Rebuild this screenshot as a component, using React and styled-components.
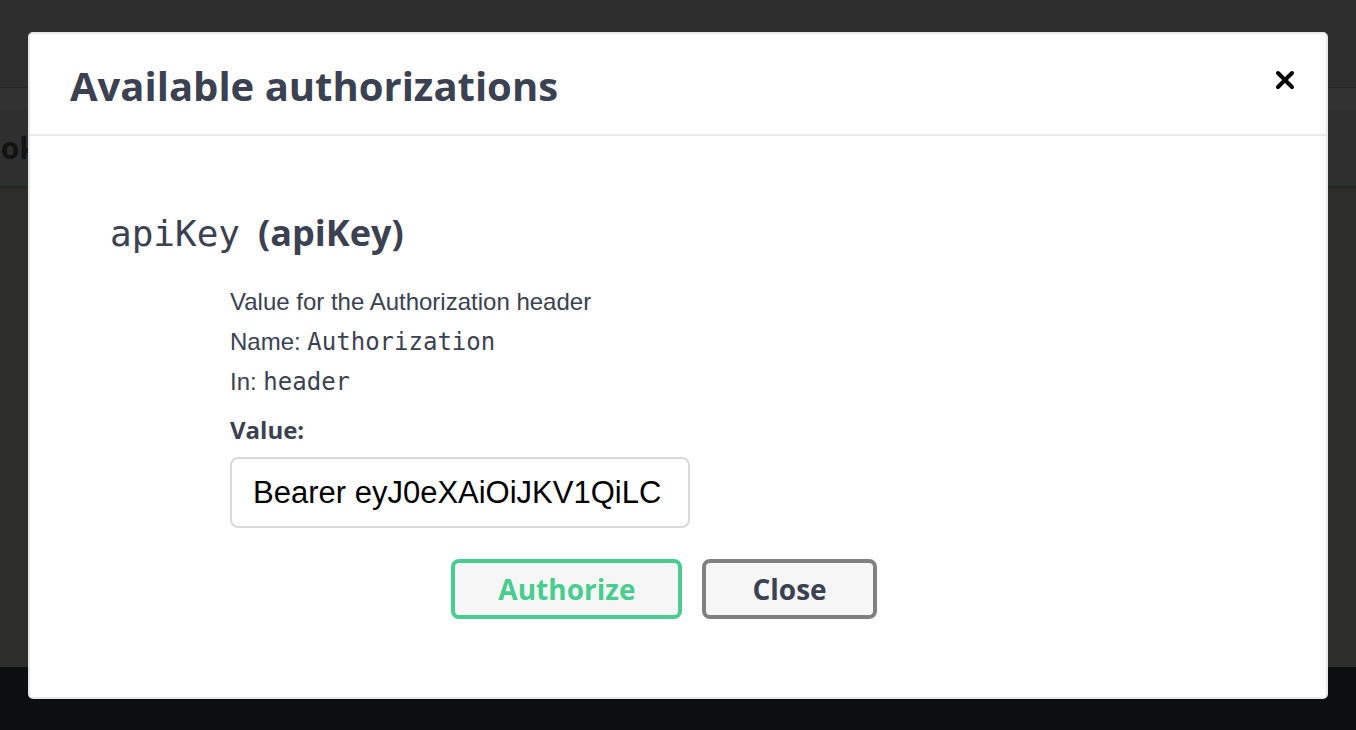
import React from "react";
import styled, { createGlobalStyle } from "styled-components";

const GlobalStyle = createGlobalStyle`
  html, body {
    margin: 0;
    padding: 0;
    background: #0d0e10;
  }
  * {
    box-sizing: border-box;
  }
`;

const Page = styled.div`
  height: 730px;
  display: flex;
  flex-direction: column;
  overflow: hidden;
`;

const TopBar = styled.div`
  height: 88px;
  background: #2e2e2e;
  border-bottom: 1px solid #262626;
`;

const SubBar = styled.div`
  height: 21px;
  background: #323232;
`;

const SectionHead = styled.div`
  height: 79px;
  background: #2f2f2f;
  border-bottom: 2px solid #1c2a19;
  display: flex;
  align-items: center;
  font-family: "Open Sans", sans-serif;
  font-weight: 700;
  font-size: 30px;
  color: #131313;
  text-indent: -38px;
`;

const Content = styled.div`
  flex: 1;
  background: #2d2e2b;
`;

const Footer = styled.div`
  height: 63px;
  background: #0d0e10;
`;

const Modal = styled.div`
  position: fixed;
  top: 32px;
  left: 28px;
  width: 1300px;
  height: 667px;
  background: #fff;
  border: 2px solid #e8e8e8;
  border-radius: 5px;
  display: flex;
  flex-direction: column;
  color: #3b4151;
`;

const ModalHeader = styled.div`
  height: 102px;
  display: flex;
  align-items: center;
  justify-content: space-between;
  padding: 0 31px 0 40px;
  border-bottom: 2px solid #ebebeb;
`;

const ModalTitle = styled.h3`
  margin: 0;
  font-family: "Open Sans", sans-serif;
  font-weight: 700;
  font-size: 40px;
  line-height: 1;
  padding-top: 4px;
  color: #3b4151;
`;

const CloseIcon = styled.button`
  border: 0;
  background: none;
  padding: 0;
  width: 20px;
  height: 20px;
  display: flex;
  cursor: pointer;
  margin-top: -8px;
`;

const ModalBody = styled.div`
  padding: 75px 108px 0 80px;
`;

const SchemeTitle = styled.h4`
  margin: 0;
  font-family: "Open Sans", sans-serif;
  font-weight: 700;
  font-size: 36px;
  line-height: 44px;
  color: #3b4151;
`;

const Code = styled.code`
  font-family: "DejaVu Sans Mono", monospace;
  font-weight: 400;
  font-size: ${(p) => p.size || 24}px;
  margin-right: ${(p) => p.gap || 0}px;
`;

const Details = styled.div`
  padding-left: 120px;
  margin-top: 26px;
`;

const Line = styled.p`
  margin: 0;
  font-family: "Liberation Sans", Arial, sans-serif;
  font-size: 24px;
  line-height: 40px;
  color: #3b4151;
`;

const Label = styled.label`
  display: block;
  margin-top: 8px;
  font-family: "Open Sans", sans-serif;
  font-weight: 700;
  font-size: 24px;
  line-height: 40px;
`;

const Input = styled.input`
  display: block;
  margin-top: 7px;
  width: 460px;
  height: 71px;
  padding: 0 18px 0 21px;
  border: 2px solid #d9d9d9;
  border-radius: 8px;
  background: #fff;
  font-family: "Liberation Sans", Arial, sans-serif;
  font-size: 31px;
  color: #000;
  outline: none;
`;

const Buttons = styled.div`
  margin-top: 31px;
  display: flex;
  justify-content: center;
  gap: 20px;
`;

const Button = styled.button`
  height: 60px;
  padding: 0 ${(p) => p.pad}px;
  background: #f6f6f6;
  border: 4px solid ${(p) => p.accent};
  border-radius: 8px;
  color: ${(p) => p.ink};
  font-family: "Open Sans", sans-serif;
  font-weight: 700;
  font-size: 28px;
  cursor: pointer;
`;

const App = () => {
  return (
    <Page>
      <GlobalStyle />
      <TopBar />
      <SubBar />
      <SectionHead>Books</SectionHead>
      <Content />
      <Footer />

      <Modal>
        <ModalHeader>
          <ModalTitle>Available authorizations</ModalTitle>
          <CloseIcon aria-label="Close">
            <svg width="20" height="20" viewBox="0 0 20 20">
              <path
                d="M3 3 L17 17 M17 3 L3 17"
                stroke="#000"
                strokeWidth="4"
                strokeLinecap="round"
              />
            </svg>
          </CloseIcon>
        </ModalHeader>
        <ModalBody>
          <SchemeTitle>
            <Code size={36} gap={18}>apiKey</Code>(apiKey)
          </SchemeTitle>
          <Details>
            <Line>Value for the Authorization header</Line>
            <Line>
              Name: <Code>Authorization</Code>
            </Line>
            <Line>
              In: <Code>header</Code>
            </Line>
            <Label>Value:</Label>
            <Input type="text" defaultValue="Bearer eyJ0eXAiOiJKV1QiLC" />
          </Details>
          <Buttons>
            <Button pad={43} accent="#49cc90" ink="#49cc90">
              Authorize
            </Button>
            <Button pad={46} accent="#808080" ink="#3b4151">
              Close
            </Button>
          </Buttons>
        </ModalBody>
      </Modal>
    </Page>
  );
};

export default App;
